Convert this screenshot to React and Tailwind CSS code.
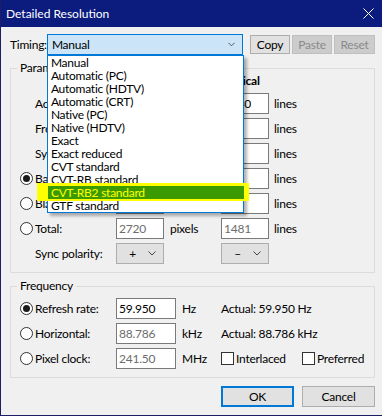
import React from 'react';

const timings = [
  'Manual',
  'Automatic (PC)',
  'Automatic (HDTV)',
  'Automatic (CRT)',
  'Native (PC)',
  'Native (HDTV)',
  'Exact',
  'Exact reduced',
  'CVT standard',
  'CVT-RB standard',
  'CVT-RB2 standard',
  'GTF standard',
];

const params = [
  { label: 'Active:', h: '2560', v: '1440' },
  { label: 'Front porch:', h: '8', v: '17' },
  { label: 'Sync width:', h: '32', v: '8' },
  { label: 'Back porch:', radio: true, checked: true, h: '40', v: '16' },
  { label: 'Blanking:', radio: true, h: '160', v: '41' },
  { label: 'Total:', radio: true, h: '2720', v: '1481', readOnly: true },
];

const Radio = ({ checked }) => (
  <span className="w-[13px] h-[13px] rounded-full border border-[#333] bg-white flex items-center justify-center shrink-0">
    {checked && <span className="w-[7px] h-[7px] rounded-full bg-[#1a1a1a]" />}
  </span>
);

const Checkbox = () => <span className="w-[13px] h-[13px] border border-[#333] bg-white shrink-0" />;

const Chevron = ({ w = 8 }) => (
  <svg width={w} height="5" viewBox="0 0 8 5" className="shrink-0">
    <path d="M0.5 0.5 L4 4 L7.5 0.5" fill="none" stroke="#444" strokeWidth="1" />
  </svg>
);

const Field = ({ value, gray, w = 'w-[48px]' }) => (
  <div className={`${w} h-[21px] border border-[#7a7a7a] bg-white pl-[2px] leading-[19px] shrink-0 ${gray ? 'text-[#6d6d6d]' : 'text-black'}`}>
    {value}
  </div>
);

const Select = ({ value }) => (
  <div className="w-[48px] h-[21px] border border-[#adadad] bg-[#e1e1e1] flex items-center shrink-0">
    <span className="w-[31px] text-center leading-[19px]">{value}</span>
    <Chevron />
  </div>
);

const RowLabel = ({ row }) =>
  row.radio ? (
    <div className="w-[96px] flex items-center gap-[2px] shrink-0">
      <Radio checked={row.checked} />
      <span>{row.label}</span>
    </div>
  ) : (
    <div className="w-[96px] pl-[15px] shrink-0">{row.label}</div>
  );

export default function App() {
  return (
    <div className="w-[382px] h-[416px] bg-[#f0f0f0] border-l border-b border-[#1e1c66] flex flex-col text-[12px] tracking-[-0.25px] text-black font-['Lato','Liberation_Sans',Arial,sans-serif] overflow-hidden">
      <div className="h-[27px] bg-[#0c1b7e] flex items-center justify-between pl-[5px] pr-[8px] shrink-0">
        <span className="text-white text-[12px] tracking-normal">Detailed Resolution</span>
        <svg width="11" height="11" viewBox="0 0 11 11">
          <path d="M0.5 0.5 L10.5 10.5 M10.5 0.5 L0.5 10.5" stroke="#fff" strokeWidth="1" />
        </svg>
      </div>

      <div className="flex-1 flex flex-col pl-[9px] pr-[7px]">
        {/* Timing row */}
        <div className="mt-[7px] h-[21px] flex items-center">
          <span className="w-[37px]">Timing:</span>
          <div className="relative z-10 w-[197px] h-[21px] border border-[#0078d7] bg-[#cce4f7] flex items-center justify-between pl-[4px] pr-[7px]">
            <span>Manual</span>
            <Chevron w={7} />
            <div className="absolute left-[-1px] top-[20px] w-[197px] border border-[#0078d7] bg-white shadow-[3px_3px_3px_rgba(0,0,0,0.3)]">
              {timings.map((t) =>
                t === 'CVT-RB2 standard' ? (
                  <div key={t} className="relative h-[13px] leading-[13px] pl-[3px]">
                    <span className="absolute left-[-11px] right-[-6px] top-[-3px] bottom-[-2px] bg-[#ffff00]" />
                    <span className="absolute left-0 right-[-1px] top-0 bottom-0 bg-[#3a9a00]" />
                    <span className="relative text-[#ffff00]">{t}</span>
                  </div>
                ) : (
                  <div key={t} className="h-[13px] leading-[13px] pl-[3px] whitespace-nowrap">
                    {t}
                  </div>
                )
              )}
            </div>
          </div>
          <div className="ml-[7px] flex gap-[2px]">
            <div className="w-[40px] h-[19px] border border-[#adadad] bg-[#e1e1e1] flex items-center justify-center">Copy</div>
            <div className="w-[40px] h-[19px] border border-[#bfbfbf] bg-[#cccccc] text-[#8a8a8a] flex items-center justify-center">Paste</div>
            <div className="w-[41px] h-[19px] border border-[#bfbfbf] bg-[#cccccc] text-[#8a8a8a] flex items-center justify-center">Reset</div>
          </div>
        </div>

        {/* Parameters */}
        <fieldset className="mt-[6px] border border-[#dcdcdc] pl-[6px] pb-[8px]">
          <legend className="px-[3px] leading-[14px]">Parameters</legend>
          <div className="ml-[3px] flex flex-col">
            <div className="-mt-[1px] h-[14px] leading-[14px] flex font-bold">
              <span className="w-[96px]" />
              <span className="w-[105px]">Horizontal</span>
              <span>Vertical</span>
            </div>
            <div className="mt-[5px] flex flex-col gap-[4px]">
              {params.map((row) => (
                <div key={row.label} className="h-[21px] flex items-center">
                  <RowLabel row={row} />
                  <Field value={row.h} gray={row.readOnly} />
                  <span className="w-[57px] pl-[6px] shrink-0">pixels</span>
                  <Field value={row.v} gray={row.readOnly} />
                  <span className="ml-[5px]">lines</span>
                </div>
              ))}
              <div className="h-[21px] flex items-center">
                <div className="w-[96px] pl-[15px] shrink-0">Sync polarity:</div>
                <Select value="+" />
                <span className="w-[57px] shrink-0" />
                <Select value="–" />
              </div>
            </div>
          </div>
        </fieldset>

        {/* Frequency */}
        <fieldset className="mt-[6px] border border-[#dcdcdc] pl-[6px] pb-[8px]">
          <legend className="px-[3px] leading-[14px]">Frequency</legend>
          <div className="ml-[3px] mt-[5px] flex flex-col gap-[4px]">
            <div className="h-[21px] flex items-center">
              <RowLabel row={{ label: 'Refresh rate:', radio: true, checked: true }} />
              <Field value="59.950" w="w-[60px]" />
              <span className="w-[45px] pl-[6px] shrink-0">Hz</span>
              <span>Actual: 59.950 Hz</span>
            </div>
            <div className="h-[21px] flex items-center">
              <RowLabel row={{ label: 'Horizontal:', radio: true }} />
              <Field value="88.786" w="w-[60px]" gray />
              <span className="w-[45px] pl-[6px] shrink-0">kHz</span>
              <span>Actual: 88.786 kHz</span>
            </div>
            <div className="h-[21px] flex items-center">
              <RowLabel row={{ label: 'Pixel clock:', radio: true }} />
              <Field value="241.50" w="w-[60px]" gray />
              <span className="w-[45px] pl-[6px] shrink-0">MHz</span>
              <div className="w-[81px] flex items-center gap-[2px] shrink-0">
                <Checkbox />
                <span>Interlaced</span>
              </div>
              <div className="flex items-center gap-[2px]">
                <Checkbox />
                <span>Preferred</span>
              </div>
            </div>
          </div>
        </fieldset>

        {/* Buttons */}
        <div className="mt-[8px] flex justify-end gap-[8px]">
          <div className="w-[73px] h-[21px] border-2 border-[#0078d7] bg-[#e1e1e1] flex items-center justify-center">OK</div>
          <div className="w-[73px] h-[21px] border border-[#adadad] bg-[#e1e1e1] flex items-center justify-center">Cancel</div>
        </div>
      </div>
    </div>
  );
}
